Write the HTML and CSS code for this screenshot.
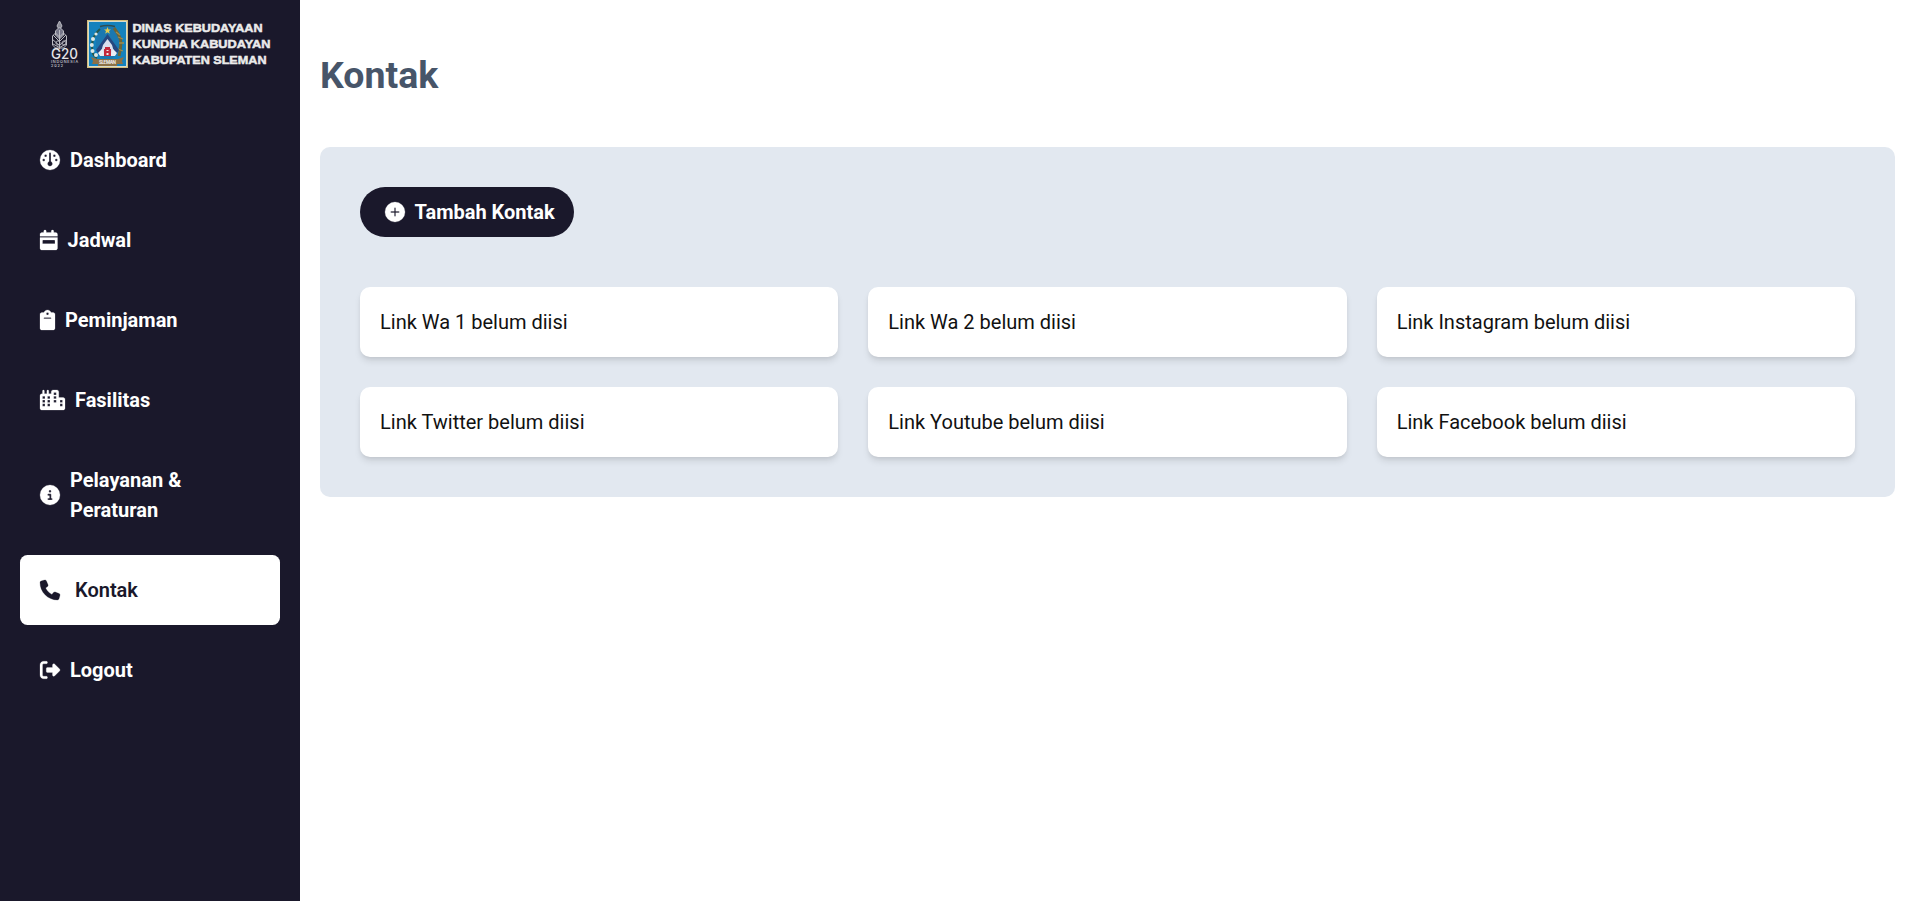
FILE: index.html
```html
<!DOCTYPE html>
<html lang="id">
<head>
<meta charset="utf-8">
<title>Kontak</title>
<link rel="stylesheet" href="styles.css">
</head>
<body>
<div class="layout">
  <aside class="sidebar">
    <div class="brand">
      <svg class="brand-logo" viewBox="0 0 224 52" width="224" height="52">
        <g fill="none" stroke="#b9b9c1" stroke-width="1">
          <path d="M10.500 2L8 7l2.500 4L13 7Z" fill="#8d8d98"/>
          <path d="M10.500 8L6.500 12v4l4 4 4-4v-4Z" fill="#77778a"/>
          <path d="M10.500 11v19M6.500 14l4 4 4-4M4 16l6.500 6.500L17 16M3 20l7.500 6.500L18 20M4 25l6.500 3.500L17 25"/>
          <path d="M6.500 14l-3 3v9l3 3h8l3-3v-9l-3-3M7 24a2 2 0 1 0 0-.1M13 24a2 2 0 1 0 0-.1"/>
        </g>
        <g class="brand-small">
          <text class="g20" x="2" y="39.500" textLength="27" lengthAdjust="spacingAndGlyphs">G20</text>
          <text class="tiny" x="2" y="44" textLength="27">INDONESIA</text>
          <text class="tiny" x="2" y="47.500" textLength="12">2022</text>
        </g>
        <rect x="38" y="1" width="41" height="48" fill="#d3bd7b"/>
        <rect x="39.200" y="2.200" width="38.600" height="45.600" fill="#d9e3df"/>
        <rect x="40" y="3" width="37" height="44" fill="#1482bd"/>
        <path d="M51 8H66V11L70 14V31Q67 38 58.500 42Q50 38 47 31V14L51 11Z" fill="#1b78b0"/>
        <path d="M51 7.500Q58.500 5.500 66 7.500" fill="none" stroke="#2f4c50" stroke-width="1.500"/>
        <path d="M58.500 8l1 2.500h2.500l-2 1.600.8 2.600-2.300-1.500-2.300 1.500.8-2.600-2-1.600h2.500z" fill="#e2cb4f"/>
        <path d="M51 10Q43 17 43 27T48 39" fill="none" stroke="#27584c" stroke-width="2"/>
        <path d="M65 9Q69 14 71 19T70 37" fill="none" stroke="#6b6538" stroke-width="3"/>
        <path d="M67 13l4 3M69 18l5 2M70 24l5 0M69 30l5 2" stroke="#a18b4b" stroke-width="1.300"/>
        <g fill="#dce8e6"><circle cx="47" cy="15" r="1.600"/><circle cx="44" cy="20" r="2"/><circle cx="42.800" cy="26" r="2"/><circle cx="43.500" cy="32" r="2"/><circle cx="47" cy="36" r="2"/></g>
        <path d="M58.500 15L70 31L66 37H51L47 31Z" fill="#25477f"/>
        <path d="M58.500 20L63 26L66 36H51L54 26Z" fill="#d9dfed"/>
        <path d="M49 34l4-4 3 7h-5zM68 34l-4-4-3 7h5z" fill="#e8eef5"/>
        <path d="M56 28h5v2h1v7h-7v-7h1z" fill="#c3293c"/>
        <path d="M57.500 31h2v1h-2zM57.500 34h2v2h-2z" fill="#eee"/>
        <path d="M42 38l6 2h21l6-2-2 4 1 3h-6v2H49v-2h-6l1-3z" fill="#8c7146"/>
        <text class="crest" x="50" y="45" textLength="17">SLEMAN</text>
        <g class="brand-name">
          <text x="83.500" y="12.700" textLength="130" lengthAdjust="spacingAndGlyphs">DINAS KEBUDAYAAN</text>
          <text x="83.500" y="28.700" textLength="138" lengthAdjust="spacingAndGlyphs">KUNDHA KABUDAYAN</text>
          <text x="83.500" y="45" textLength="134" lengthAdjust="spacingAndGlyphs">KABUPATEN SLEMAN</text>
        </g>
      </svg>
    </div>
    <nav class="menu">
      <a class="item"><svg class="icon" viewBox="0 0 512 512"><path d="M0 256a256 256 0 1 1 512 0A256 256 0 1 1 0 256zm320 96c0-26.900-16.500-49.900-40-59.300V88c0-13.300-10.700-24-24-24s-24 10.700-24 24V292.700c-23.500 9.500-40 32.500-40 59.300c0 35.300 28.700 64 64 64s64-28.700 64-64zM144 176a32 32 0 1 0 0-64 32 32 0 1 0 0 64zm-16 80a32 32 0 1 0 -64 0 32 32 0 1 0 64 0zm288 32a32 32 0 1 0 0-64 32 32 0 1 0 0 64zM400 144a32 32 0 1 0 -64 0 32 32 0 1 0 64 0z"/></svg><span>Dashboard</span></a>
      <a class="item"><svg class="icon" viewBox="0 0 448 512"><path d="M128 0c17.700 0 32 14.300 32 32V64H288V32c0-17.700 14.300-32 32-32s32 14.300 32 32V64h48c26.500 0 48 21.500 48 48v48H0V112C0 85.500 21.500 64 48 64H96V32c0-17.700 14.300-32 32-32zM0 192H448V464c0 26.500-21.500 48-48 48H48c-26.500 0-48-21.500-48-48V192zm80 64c-8.800 0-16 7.200-16 16v64c0 8.800 7.200 16 16 16H368c8.800 0 16-7.200 16-16V272c0-8.800-7.200-16-16-16H80z"/></svg><span>Jadwal</span></a>
      <a class="item"><svg class="icon" viewBox="0 0 384 512"><path d="M192 0c-41.800 0-77.400 26.700-90.500 64H48C21.500 64 0 85.500 0 112V464c0 26.500 21.500 48 48 48H336c26.500 0 48-21.500 48-48V112c0-26.500-21.500-48-48-48H282.500C269.400 26.700 233.800 0 192 0zm0 64a32 32 0 1 1 0 64 32 32 0 1 1 0-64zM112 192H272c8.800 0 16 7.200 16 16s-7.200 16-16 16H112c-8.800 0-16-7.200-16-16s7.200-16 16-16z"/></svg><span>Peminjaman</span></a>
      <a class="item"><svg class="icon" viewBox="0 0 640 512"><path fill-rule="evenodd" d="M480 48c0-26.500-21.500-48-48-48H336c-26.500 0-48 21.500-48 48V96H224V24c0-13.300-10.700-24-24-24s-24 10.700-24 24V96H112V24c0-13.300-10.700-24-24-24S64 10.700 64 24V96H48C21.500 96 0 117.500 0 144V464c0 26.500 21.500 48 48 48H592c26.500 0 48-21.500 48-48V240c0-26.500-21.500-48-48-48H480V48zM64 160h64v64H64zM64 256h64v64H64zM64 352h64v64H64zM192 160h64v64H192zM192 256h64v64H192zM192 352h64v64H192zM352 64h64v64H352zM352 160h64v64H352zM352 256h64v64H352zM512 256h64v64H512zM512 352h64v64H512z"/></svg><span>Fasilitas</span></a>
      <a class="item"><svg class="icon" viewBox="0 0 512 512"><path d="M256 512A256 256 0 1 0 256 0a256 256 0 1 0 0 512zM216 336h24V272H216c-13.300 0-24-10.700-24-24s10.700-24 24-24h48c13.300 0 24 10.700 24 24v88h8c13.300 0 24 10.700 24 24s-10.700 24-24 24H216c-13.300 0-24-10.700-24-24s10.700-24 24-24zm40-208a32 32 0 1 1 0 64 32 32 0 1 1 0-64z"/></svg><span>Pelayanan &amp; Peraturan</span></a>
      <a class="item active"><svg class="icon" viewBox="0 0 512 512"><path d="M164.900 24.600c-7.700-18.600-28-28.500-47.400-23.200l-88 24C12.100 30.200 0 46 0 64C0 311.400 200.600 512 448 512c18 0 33.800-12.100 38.600-29.500l24-88c5.300-19.400-4.600-39.700-23.200-47.400l-96-40c-16.300-6.800-35.200-2.100-46.300 11.600L304.700 368C234.300 334.700 177.300 277.700 144 207.300L193.300 167c13.700-11.200 18.400-30 11.600-46.300l-40-96z"/></svg><span>Kontak</span></a>
      <a class="item"><svg class="icon" viewBox="0 0 512 512"><path d="M377.900 105.900L500.700 228.700c7.200 7.200 11.300 17.100 11.300 27.300s-4.100 20.100-11.300 27.300L377.900 406.100c-6.400 6.400-15 9.900-24 9.900c-18.700 0-33.900-15.200-33.900-33.900l0-62.100-128 0c-17.700 0-32-14.300-32-32l0-64c0-17.700 14.300-32 32-32l128 0 0-62.100c0-18.700 15.200-33.900 33.900-33.900c9 0 17.600 3.600 24 9.900zM160 96L96 96c-17.700 0-32 14.300-32 32l0 256c0 17.700 14.300 32 32 32l64 0c17.700 0 32 14.300 32 32s-14.300 32-32 32l-64 0c-53 0-96-43-96-96L0 128C0 75 43 32 96 32l64 0c17.700 0 32 14.300 32 32s-14.300 32-32 32z"/></svg><span>Logout</span></a>
    </nav>
  </aside>
  <main class="content">
    <h1 class="title">Kontak</h1>
    <section class="panel">
      <button class="add"><svg class="icon" viewBox="0 0 512 512"><path fill-rule="evenodd" d="M256 512A256 256 0 1 0 256 0a256 256 0 1 0 0 512zM238 352V274H160c-10 0-18-8-18-18s8-18 18-18h78V160c0-10 8-18 18-18s18 8 18 18v78h78c10 0 18 8 18 18s-8 18-18 18H274v78c0 10-8 18-18 18s-18-8-18-18z"/></svg><span>Tambah Kontak</span></button>
      <div class="cards">
        <div class="card">Link Wa 1 belum diisi</div>
        <div class="card">Link Wa 2 belum diisi</div>
        <div class="card">Link Instagram belum diisi</div>
        <div class="card">Link Twitter belum diisi</div>
        <div class="card">Link Youtube belum diisi</div>
        <div class="card">Link Facebook belum diisi</div>
      </div>
    </section>
  </main>
</div>
</body>
</html>
```
FILE: styles.css
```css
* { box-sizing: border-box; }
body {
  margin: 0;
  background: #fff;
  color: #111;
  font: 400 20px/30px Roboto, sans-serif;
}
.layout { display: flex; min-height: 100vh; }
.sidebar {
  flex: 0 0 300px;
  padding: 19px 20px 0;
  background: #1a182b;
  color: #fff;
}
.brand { height: 106px; padding-left: 29px; }
.brand-logo { display: block; }
.brand-name { font: 900 11.5px "Liberation Sans", Arial, sans-serif; fill: #ebebeb; stroke: #ebebeb; stroke-width: 0.5px; }
.brand-small { fill: #e4e4e8; }
.g20 { font: 500 14px Inter, sans-serif; }
.tiny { font: 400 3.8px Inter, sans-serif; }
.crest { font: 700 4.5px Inter, sans-serif; fill: #eee; }
.menu { display: flex; flex-direction: column; gap: 10px; }
.item {
  display: flex;
  align-items: center;
  gap: 10px;
  padding: 20px;
  border-radius: 7.5px;
  font-weight: 700;
}
.item span { max-width: 150px; }
.icon { position: relative; top: -0.5px; flex: none; height: 20px; fill: currentColor; display: block; overflow: visible; stroke: currentColor; stroke-width: 6; }
.active { gap: 15px; background: #fff; color: #1a182b; font-weight: 600; }
.content { flex: 1; padding: 50px 33px 0 20px; }
.title {
  margin: 0 0 47px;
  color: #475569;
  font-size: 37.5px;
  line-height: 50px;
  font-weight: 700;
}
.panel { padding: 40px; border-radius: 10px; background: #e2e8f0; }
.add {
  display: flex;
  align-items: center;
  gap: 9.5px;
  height: 50px;
  margin: 0 0 50px;
  padding: 0 19px 0 25px;
  border: 0;
  border-radius: 25px;
  background: #1a182b;
  color: #fff;
  font: 700 20px/30px Roboto, sans-serif;
}
.cards { display: grid; grid-template-columns: repeat(3, 1fr); gap: 30px; }
.card {
  padding: 20px;
  border-radius: 10px;
  background: #fff;
  box-shadow: 0 5px 7.5px -1.25px rgb(0 0 0 / 0.1), 0 2.5px 5px -2.5px rgb(0 0 0 / 0.1);
}
```
